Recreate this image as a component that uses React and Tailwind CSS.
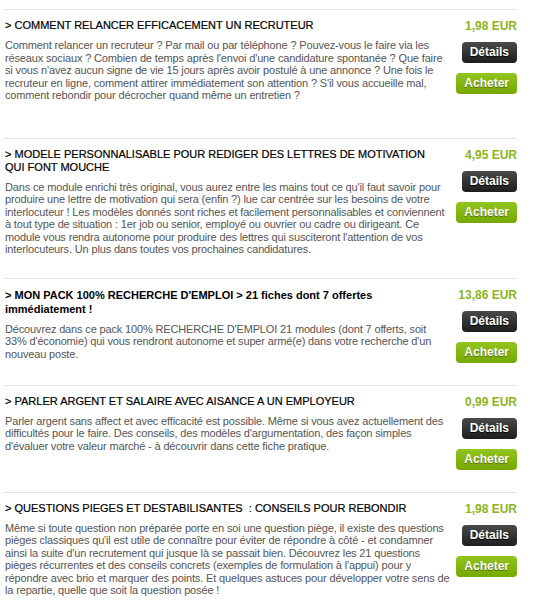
import React from 'react';

const fiches = [
  {
    title: '> COMMENT RELANCER EFFICACEMENT UN RECRUTEUR',
    price: '1,98 EUR',
    text: "Comment relancer un recruteur ? Par mail ou par téléphone ? Pouvez-vous le faire via les réseaux sociaux ? Combien de temps après l'envoi d'une candidature spontanée ? Que faire si vous n'avez aucun signe de vie 15 jours après avoir postulé à une annonce ? Une fois le recruteur en ligne, comment attirer immédiatement son attention ? S'il vous accueille mal, comment rebondir pour décrocher quand même un entretien ?",
    extra: true,
  },
  {
    title: '> MODELE PERSONNALISABLE POUR REDIGER DES LETTRES DE MOTIVATION QUI FONT MOUCHE',
    price: '4,95 EUR',
    text: "Dans ce module enrichi très original, vous aurez entre les mains tout ce qu'il faut savoir pour produire une lettre de motivation qui sera (enfin ?) lue car centrée sur les besoins de votre interlocuteur ! Les modèles donnés sont riches et facilement personnalisables et conviennent à tout type de situation : 1er job ou senior, employé ou ouvrier ou cadre ou dirigeant. Ce module vous rendra autonome pour produire des lettres qui susciteront l'attention de vos interlocuteurs. Un plus dans toutes vos prochaines candidatures.",
  },
  {
    title: "> MON PACK 100% RECHERCHE D'EMPLOI > 21 fiches dont 7 offertes immédiatement !",
    price: '13,86 EUR',
    text: "Découvrez dans ce pack 100% RECHERCHE D'EMPLOI 21 modules (dont 7 offerts, soit 33% d'économie) qui vous rendront autonome et super armé(e) dans votre recherche d'un nouveau poste.",
    bold: true,
  },
  {
    title: '> PARLER ARGENT ET SALAIRE AVEC AISANCE A UN EMPLOYEUR',
    price: '0,99 EUR',
    text: "Parler argent sans affect et avec efficacité est possible. Même si vous avez actuellement des difficultés pour le faire. Des conseils, des modèles d'argumentation, des façon simples d'évaluer votre valeur marché - à découvrir dans cette fiche pratique.",
  },
  {
    title: '> QUESTIONS PIEGES ET DESTABILISANTES \u00a0: CONSEILS POUR REBONDIR',
    price: '1,98 EUR',
    text: "Même si toute question non préparée porte en soi une question piège, il existe des questions pièges classiques qu'il est utile de connaître pour éviter de répondre à côté - et condamner ainsi la suite d'un recrutement qui jusque là se passait bien. Découvrez les 21 questions pièges récurrentes et des conseils concrets (exemples de formulation à l'appui) pour y répondre avec brio et marquer des points. Et quelques astuces pour développer votre sens de la repartie, quelle que soit la question posée !",
  },
];

const Fiche = ({ fiche }) => (
  <div className="flex border-t border-[#e2e2e2] pt-[9px] pb-[22px]">
    <div className="w-[446px] pl-px">
      <h3
        className={`pr-[12px] text-[11px] text-black ${
          fiche.bold ? 'font-bold leading-[14px]' : 'font-normal leading-[13px] [-webkit-text-stroke:0.2px_#000]'
        }`}
      >
        {fiche.title}
      </h3>
      <p
        className={`mt-[7px] text-[11px] leading-[12.5px] tracking-[-0.15px] text-[#555] ${
          fiche.extra ? 'pb-[14px]' : ''
        }`}
      >
        {fiche.text}
      </p>
    </div>
    <div className="flex-1 flex flex-col items-end">
      <span className="text-[12px] leading-[14px] font-bold text-[#8ab61c]">{fiche.price}</span>
      <button className="mt-[9px] h-[21px] px-2 rounded-[4px] bg-gradient-to-b from-[#4a4a4a] to-[#1e1e1e] text-white text-[12px] font-bold leading-[21px] [text-shadow:0_1px_1px_#000]">
        Détails
      </button>
      <button className="mt-[10px] h-[21px] px-2 rounded-[4px] bg-gradient-to-b from-[#92c51e] to-[#76a800] text-white text-[12px] font-bold leading-[21px] [text-shadow:0_1px_1px_#4a6a00]">
        Acheter
      </button>
    </div>
  </div>
);

export default function App() {
  return (
    <div className="bg-white min-h-screen pt-[9px] pl-[4px] [font-family:'Liberation_Sans',Arial,sans-serif]">
      <div className="w-[513px]">
        {fiches.map((f, i) => (
          <Fiche key={i} fiche={f} />
        ))}
      </div>
    </div>
  );
}
